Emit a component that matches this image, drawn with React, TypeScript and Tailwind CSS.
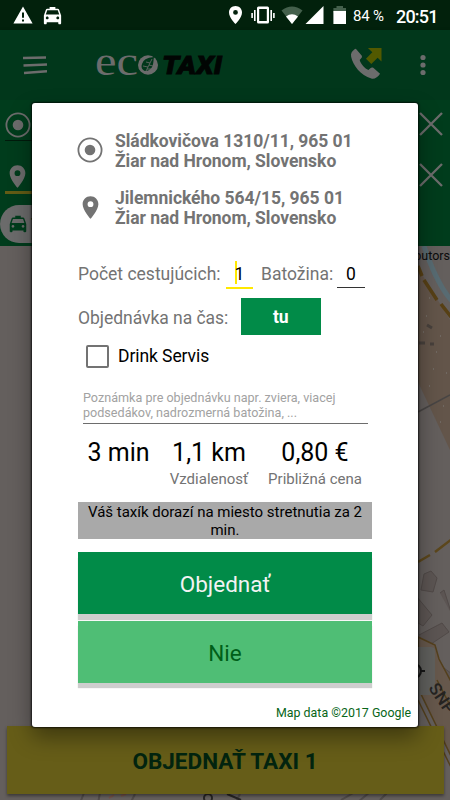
import type { ReactNode } from "react";

interface Stat {
  value: string;
  label: string;
  width: string;
}

const STATS: Stat[] = [
  { value: "3 min", label: "", width: "w-[81px]" },
  { value: "1,1 km", label: "Vzdialenosť", width: "w-[100px]" },
  { value: "0,80 €", label: "Približná cena", width: "w-[112px]" },
];

const PIN = "M12 2C8.1 2 5 5.1 5 9c0 5.3 7 13 7 13s7-7.7 7-13c0-3.900-3.100-7-7-7zm0 9.600a2.600 2.600 0 1 1 0-5.200 2.600 2.600 0 0 1 0 5.200z";
const TAXI =
  "M18.92 6.01C18.72 5.42 18.16 5 17.5 5H15V3H9v2H6.5c-.66 0-1.21.42-1.42 1.01L3 12v8c0 .55.45 1 1 1h1c.55 0 1-.45 1-1v-1h12v1c0 .55.45 1 1 1h1c.55 0 1-.45 1-1v-8l-2.08-5.99zM6.5 16c-.83 0-1.5-.67-1.5-1.5S5.67 13 6.5 13s1.5.67 1.5 1.5S7.33 16 6.5 16zm11 0c-.83 0-1.5-.67-1.5-1.5s.67-1.5 1.5-1.5 1.5.67 1.5 1.5-.67 1.5-1.5 1.5zM5 11l1.5-4.5h11L19 11H5z";

function Glyph({ d, className }: { d: string; className: string }) {
  return (
    <svg viewBox="0 0 24 24" fill="currentColor" className={className}>
      <path d={d} />
    </svg>
  );
}

function Target({ className }: { className: string }) {
  return (
    <svg viewBox="0 0 26 26" className={className}>
      <circle cx="13" cy="13" r="11.6" fill="none" stroke="currentColor" strokeWidth="1.8" />
      <circle cx="13" cy="13" r="5.3" fill="currentColor" />
    </svg>
  );
}

function Cross({ className }: { className: string }) {
  return (
    <svg viewBox="0 0 24 24" className={`h-6 w-6 text-[#6c6c6c] ${className}`}>
      <path d="M1 1 23 23M23 1 1 23" stroke="currentColor" strokeWidth="2.3" fill="none" />
    </svg>
  );
}

function StatusBar() {
  return (
    <div className="flex h-[30px] items-center bg-[#02210c] text-white">
      <svg viewBox="0 0 20 18" className="ml-[12.5px] h-[18px] w-5" fill="currentColor">
        <path fillRule="evenodd" d="M10 .5 19.6 17.5H.4zM9 6.5v5.3h2V6.5zM9 13.5v2h2v-2z" />
      </svg>
      <Glyph d={TAXI} className="ml-[8.5px] h-[23px] w-[23px]" />
      <div className="flex-1" />
      <svg viewBox="0 0 134 22" className="h-[22px] w-[134px]" fill="currentColor">
        {/* location */}
        <path fillRule="evenodd" d="M8.5 2C4.800 2 2 4.800 2 8.400 2 13.500 8.500 20 8.500 20S15 13.500 15 8.400C15 4.800 12.200 2 8.500 2zm0 4a2.400 2.400 0 1 1 0 4.800 2.400 2.400 0 0 1 0-4.800z" />
        {/* vibrate */}
        <path fillRule="evenodd" d="M31.500 2.500h9q1.500 0 1.500 1.500v14q0 1.500-1.500 1.500h-9Q30 19.500 30 18V4q0-1.500 1.500-1.500zM32.200 5v12h7.600V5z" />
        <path d="M27 6h1.600v11H27zM24.300 9h1.600v5h-1.600zM43.400 6H45v11h-1.600zM46.100 9h1.600v5h-1.600z" />
        {/* wifi */}
        <path d="M54.500 6.500Q65 -1.500 75.500 6.500L65 20z" fill="#44604c" />
        <path d="M59 12.400Q65 8.300 71 12.400L65 20z" />
        {/* signal */}
        <path d="M96.500 2v18H78.500z" />
        {/* battery */}
        <path d="M109.500 2h6.500v2h3v4.500h-12.600V4h3.100z" fill="#44604c" />
        <path d="M106.400 7H119v13h-12.600z" />
      </svg>
      <span className="mt-[2px] ml-[-8px] w-[33px] text-[15px] tracking-[-0.2px] whitespace-nowrap">84 %</span>
      <span className="mt-[2px] mr-[11px] ml-[10px] w-[43px] text-[18px] font-medium tracking-[-0.8px] whitespace-nowrap">20:51</span>
    </div>
  );
}

function Toolbar() {
  return (
    <div className="flex h-[70px] items-center bg-[#01371b] text-[#6c6c6c] shadow-[0_2px_4px_rgba(0,0,0,0.35)]">
      <svg viewBox="0 0 24 20" className="ml-[23px] h-5 w-6" stroke="currentColor" strokeWidth="2.4">
        <path d="M0 3 23 2.500M.5 10.500 24 9.500M1 18 24 16.200" />
      </svg>
      <svg viewBox="0 0 130 30" className="ml-[48px] h-[30px] w-[130px] overflow-visible">
        <text x="0" y="24.5" fontSize="40" textLength="43" lengthAdjust="spacingAndGlyphs" fill="#6c6c6c" fontFamily="Liberation Serif, serif">ec</text>
        <ellipse cx="53" cy="15" rx="10" ry="9.700" fill="#6c6c6c" />
        <path d="M59 7Q48 8 47 14C45 19 50 23 54 20 59 17 58 12 59 7z" fill="#01371b" />
        <path d="M50 23 57 9M53 17l-5-1M54 15l4 1M55 13l-4-1M52 19l4 0" stroke="#6c6c6c" strokeWidth=".8" fill="none" />
        <text x="67" y="24" fontSize="25" textLength="60" lengthAdjust="spacingAndGlyphs" fill="#010503" stroke="#010503" strokeWidth=".8" fontWeight="900" fontStyle="italic" fontFamily="Roboto, sans-serif">TAXI</text>
      </svg>
      <div className="flex-1" />
      <svg viewBox="0 0 34 34" className="mt-[-3px] mr-[38px] h-[33px] w-[33px]">
        <path d="M5.500 2.500C3 4.500 1.500 6.500 2.200 10 4 19 12 29 23 32.500 26 33.500 30 31 32 27.500L25 21.500C24 20.800 23 21 22 21.800L20 23.800C16.500 22.500 12 17.500 11 13.500L13 11.200C13.500 10.500 13.500 9.500 13 8.700L7.500 2.200Q6.500 1.500 5.500 2.500z" fill="#6c6c6c" />
        <path d="M19.500 1H33.500V15L29.500 11.200 23 17.600 17.500 12.200 24 5.500z" fill="#525900" />
      </svg>
      <svg viewBox="0 0 6 22" className="mr-[24.5px] h-[22px] w-[6px]" fill="currentColor">
        <circle cx="3" cy="3.500" r="2.600" />
        <circle cx="3" cy="11" r="2.600" />
        <circle cx="3" cy="18.500" r="2.600" />
      </svg>
    </div>
  );
}

function RoutePanel() {
  return (
    <div className="flex h-[146px] flex-col bg-[#003c1c] text-[#6c6c6c]">
      <div className="mr-[7px] ml-[5px] flex h-[50px] items-start justify-between">
        <div className="flex h-[41px] w-[60px] border-b border-[#001b0c] pt-[12px]">
          <Target className="h-[26px] w-[26px]" />
        </div>
        <Cross className="mt-[12px]" />
      </div>
      <div className="mr-[7px] ml-[5px] flex h-[50px] items-start justify-between">
        <div className="flex h-[44px] w-[60px] border-b-[3px] border-[#635c15] pt-[13px]">
          <Glyph d={PIN} className="ml-[-1px] h-[27px] w-[27px]" />
        </div>
        <Cross className="mt-[13px]" />
      </div>
      <div className="mt-[5px] flex h-[38px] w-[120px] items-center rounded-full bg-[#6b6b6b] pl-[7px] text-[#003c1c]">
        <Glyph d={TAXI} className="h-[22px] w-[22px]" />
        <span className="ml-[2px] text-[15px] font-bold">Taxi</span>
      </div>
    </div>
  );
}

function MapView() {
  return (
    <div className="relative h-[554px] overflow-hidden bg-[#645f5d]">
      <svg viewBox="0 246 450 554" className="absolute inset-0 h-full w-full" fill="none">
        <path d="M418 266 450 312V450L418 382z" fill="#63554a" />
        <path d="M418 250 424 246 450 301V320L418 268z" fill="#645f5d" />
        <path d="M424 246C432 270 440 288 452 301" stroke="#586b72" strokeWidth="5" />
        <path d="M418 266l4 10M424 280l13 20M441 304l10 13" stroke="#574015" strokeWidth="3.500" />
        <path d="M418 412 450 395" stroke="#484544" strokeWidth="1.500" />
        <path d="M426 316h1M440 336h1M433 369h1M429 298h1M446 373h1M443 406h1M436 352h1M429 386h1M423 332h1M440 422h1" stroke="#706861" strokeWidth="2" />
        <path d="M419 343h6M430 344h4M427 325l5 3" stroke="#48413c" strokeWidth="3" />
        <path d="M418 562l12-7M435 552l17-13" stroke="#5c471c" strokeWidth="2.500" />
        <path d="M424 574l7-3 6 7-4 14-12-2zM417 597l15 18-9 11-8-5M440 593l4-3 8 25M419 635l23-12 7 9-27 18M444 668l8 6v20l-9-10z" fill="#5c5553" stroke="#514a48" />
        <path d="M418 637l17 8 4 14 40 75v80L420 692z" fill="#66584c" stroke="#54401d" strokeWidth="1.500" />
        <path d="M418 700 474 814M437 680 455 715" stroke="#54401d" strokeWidth="1.500" />
        <path d="M400 647h31q4 0 4 4v40q0 4-4 4h-31z" fill="#60605d" />
        <circle cx="414" cy="671" r="7" stroke="#171717" strokeWidth="2" />
        <path d="M420 671h5" stroke="#171717" strokeWidth="2" />
        <text x="428" y="688" fontSize="17" fontWeight="500" fill="#252321" transform="rotate(56 428 688)" fontFamily="Roboto, sans-serif">SNP</text>
        <path d="M84 793l-4 10M100 793l-2 10M135 794l-4 8M240 794l-4 8M341 800l14-8M358 802l12-10M380 800l8-8" stroke="#504b49" strokeWidth="2" />
        <path d="M109 798l5-3M121 796l5-2" stroke="#755249" strokeWidth="2" />
        <circle cx="208" cy="798" r="4" stroke="#272524" strokeWidth="2" />
        <path d="M227 794l14 6" stroke="#272524" strokeWidth="2" />
      </svg>
      <span className="absolute top-[2px] right-0 text-[12.5px] leading-4 text-[#0b0b0b]">contributors</span>
      <div className="absolute bottom-[6px] left-[6.5px] flex h-[68px] w-[437px] items-center justify-center bg-[#665d18] pt-[3px] text-[22.500px] font-bold text-[#02240f] shadow-[0_2px_3px_rgba(0,0,0,0.4)]">
        <span>OBJEDNAŤ TAXI 1</span>
      </div>
    </div>
  );
}

function Address({ icon, children }: { icon: ReactNode; children: ReactNode }) {
  return (
    <div className="flex h-10">
      <div className="flex h-[38px] w-[37px] shrink-0 items-center">{icon}</div>
      <p className="text-[17.5px] leading-5 font-bold tracking-[-0.03px] whitespace-nowrap text-[#737373]">{children}</p>
    </div>
  );
}

function OrderDialog() {
  return (
    <div className="absolute top-[103px] left-[32px] flex h-[624px] w-[386px] flex-col rounded-[3px] bg-white px-[46px] pt-[28px] text-black shadow-[0_0_2px_1px_rgba(0,0,0,0.7),0_10px_22px_rgba(0,0,0,0.4)]">
      <Address icon={<Target className="ml-[-1px] h-[26px] w-[26px] text-[#737373]" />}>
        Sládkovičova 1310/11, 965 01
        <br />
        Žiar nad Hronom, Slovensko
      </Address>
      <div className="h-[17px]" />
      <Address icon={<Glyph d={PIN} className="ml-[-1.5px] h-[27px] w-[27px] text-[#737373]" />}>
        Jilemnického 564/15, 965 01
        <br />
        Žiar nad Hronom, Slovensko
      </Address>

      <div className="mt-[31px] flex h-[30px] text-[17.5px] leading-[30px] whitespace-nowrap text-[#737373]">
        <span className="w-[148px]">Počet cestujúcich:</span>
        <div className="flex h-[30px] w-[27px] items-start justify-center border-b-2 border-[#ffe800] text-black">
          <span className="mt-[2px] mr-[-1px] h-[23px] w-[2px] bg-[#ffe800]" />
          <span className="ml-[-1px]">1</span>
        </div>
        <span className="ml-2 w-[76px]">Batožina:</span>
        <div className="h-[29px] w-[28px] border-b border-[#333] text-center text-black">0</div>
      </div>

      <div className="mt-[9px] flex h-[38px] items-start text-[17.5px] whitespace-nowrap text-[#737373]">
        <span className="w-[163px] leading-[40px] tracking-[-0.04px]">Objednávka na čas:</span>
        <button className="h-[37px] w-[79.5px] bg-[#018b48] pt-[2px] font-bold text-white">tu</button>
      </div>

      <label className="mt-[8px] flex h-[24px] items-center pl-[8px] text-[17.5px]">
        <span className="mr-[9px] h-[23px] w-[23px] rounded-[2px] border-2 border-[#737373]" />
        <span className="pt-[1px] tracking-[-0.08px]">Drink Servis</span>
      </label>

      <div className="mt-[22px] ml-[5px] h-[34px] w-[285px] border-b border-[#6d6d6d] text-[12.600px] leading-[15px] whitespace-nowrap text-[#a2a2a2]">
        Poznámka pre objednávku napr. zviera, viacej
        <br />
        podsedákov, nadrozmerná batožina, ...
      </div>

      <div className="mt-[15px] flex h-[50px] whitespace-nowrap">
        {STATS.map((stat) => (
          <div key={stat.value} className={`flex flex-col items-center ${stat.width}`}>
            <span className="text-[25px] leading-[28px]">{stat.value}</span>
            <span className="mt-px text-[15px] leading-[22px] text-[#737373]">{stat.label}</span>
          </div>
        ))}
      </div>

      <div className="mt-[13px] h-[37px] bg-[#a9a9a9] pt-[2px] text-center text-[15px] leading-[17.500px] whitespace-nowrap">
        Váš taxík dorazí na miesto stretnutia za 2
        <br />
        min.
      </div>

      <button className="mt-[13px] h-[62px] bg-[#018b48] pt-[3px] text-[22.5px] text-[#f3f3f3] shadow-[0_6px_1px_#cecece]">
        Objednať
      </button>
      <button className="mt-[7px] h-[62px] bg-[#4fbe75] pt-[3px] text-[22.5px] text-[#005f19] shadow-[0_5px_1px_#cecece]">
        Nie
      </button>
      <p className="mt-[21px] mr-[-39px] text-right text-[12.4px] leading-[17px] text-[#086519]">
        Map data ©2017 Google
      </p>
    </div>
  );
}

export default function App() {
  return (
    <div className="relative h-[800px] w-[450px] overflow-hidden font-['Roboto',sans-serif]">
      <StatusBar />
      <Toolbar />
      <RoutePanel />
      <MapView />
      <OrderDialog />
    </div>
  );
}
